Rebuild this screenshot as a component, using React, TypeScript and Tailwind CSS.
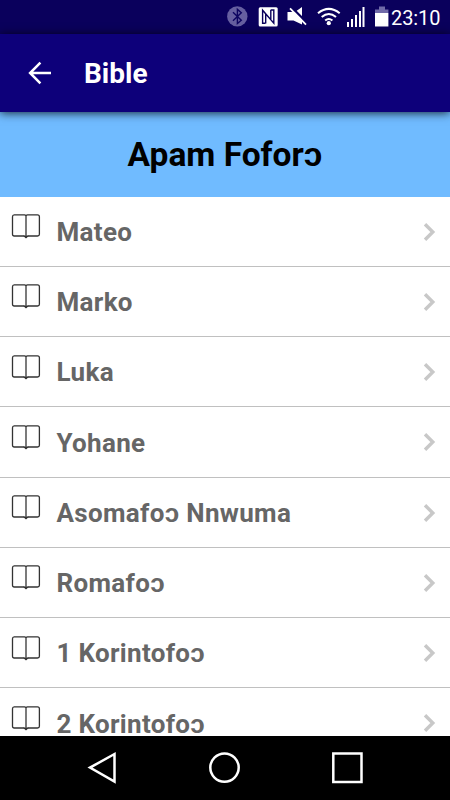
import React from "react";

const books = ["Mateo", "Marko", "Luka", "Yohane", "Asomafoɔ Nnwuma", "Romafoɔ", "1 Korintofoɔ", "2 Korintofoɔ"];

function StatusBar() {
  return (
    <header className="flex h-[34px] shrink-0 items-center bg-[#0a005c] pr-[9px] text-white">
      <svg className="ml-auto h-[34px] w-[164px] shrink-0" viewBox="226 0 164 34" fill="none">
        <circle cx="237.3" cy="16.4" r="10.2" fill="#665fa0" />
        <path d="M233 12.2 L241.3 20.3 L237.4 23.6 V9.4 L241.3 12.8 L233 20.8" stroke="#0d0460" strokeWidth="1.4" />
        <rect x="258.7" y="7.3" width="19" height="19.2" rx="1.5" fill="#fff" />
        <path d="M265.4 23.2H262.6V10.2L273.8 23.2V10H270.9M265.7 14.2V23.5M270.8 9.8V19" stroke="#0a005c" strokeWidth="1.4" />
        <path d="M287.5 12 H295 L302 7 V24.5 L293.5 20.5 H287.5 Z" fill="#fff" />
        <path d="M291.8 7.6 L307.5 23.3" stroke="#0a005c" strokeWidth="2.4" />
        <path d="M290 8.4 L306 24.6" stroke="#fff" strokeWidth="1.8" />
        <path d="M318 13.2 Q328.8 4.5 339.7 13.2 M321.7 17 Q328.8 11 336 17 M325.2 20.5 Q328.8 17.5 332.4 20.5" stroke="#fff" strokeWidth="2.1" />
        <circle cx="328.8" cy="23.2" r="2.1" fill="#fff" />
        <path d="M348 22v5 M352 19v8 M356 15v12 M360 11v16 M363.5 7v20" stroke="#fff" strokeWidth="2" />
        <path d="M379 6.5h6v3h3.4v3.5H375V9.5h4z" fill="#706aa8" />
        <path d="M375 13h13.4v13.5H375z" fill="#fff" />
      </svg>
      <span className="w-[51px] whitespace-nowrap pl-[1px] pt-[2px] text-[20px] leading-[33px] tracking-[-0.1px]">23:10</span>
    </header>
  );
}

function BookIcon() {
  return (
    <svg className="mt-[15.6px] h-[28px] w-[30px] shrink-0" viewBox="0 0 30 28" fill="none" stroke="#333" strokeWidth="1.3">
      <path d="M3.2 2.9H13.5L15 3.4L16.5 2.9H26.5Q28.4 2.9 28.4 4.8V22.3Q28.4 24 26.5 24H17.2L15 24.9L12.8 24H3.2Q1.5 24 1.5 22.3V4.8Q1.5 2.9 3.2 2.9Z" />
      <path d="M15 3V25" />
      <path d="M13.7 24.4h2.6l-1.3 1.2z" fill="#222" />
    </svg>
  );
}

export default function App() {
  return (
    <div className="flex h-[800px] w-[450px] flex-col overflow-hidden bg-white font-['Roboto',sans-serif]">
      <StatusBar />
      <nav className="z-10 flex h-[78px] shrink-0 items-center bg-[#0d007a] pl-[28px] text-white shadow-[0_1px_9px_rgba(0,0,0,0.8)]">
        <svg className="h-[24px] w-[24px]" viewBox="0 0 24 24" fill="none" stroke="#fff" strokeWidth="2.5">
          <path d="M23 12H2M12.4 1.7L2.1 12l10.3 10.3" />
        </svg>
        <h1 className="ml-[32px] pt-[2px] text-[28px] font-bold leading-[76px]">Bible</h1>
      </nav>
      <h2 className="h-[84.5px] shrink-0 bg-[#70bbff] text-center text-[33.5px] font-bold leading-[85px] text-black">Apam Foforɔ</h2>
      <main className="min-h-0 flex-1 overflow-hidden">
        {books.map((book) => (
          <div key={book} className="flex h-[70.25px] border-b-[1.5px] border-[#c0c0c0] pl-[11px] pr-[13px]">
            <BookIcon />
            <span className="ml-[15.5px] mt-[24.3px] h-[22px] text-[26px] font-bold leading-[22px] tracking-[0.32px] text-[#666]">{book}</span>
            <svg className="ml-auto mt-[25px] h-[20px] w-[14px]" viewBox="0 0 14 20" fill="none" stroke="#c8c8c8" strokeWidth="3.4">
              <path d="M2 2.2L9.8 10L2 17.8" />
            </svg>
          </div>
        ))}
      </main>
      <footer className="flex h-[64.5px] shrink-0 bg-black">
        <svg className="h-[64px] w-[450px]" viewBox="0 736 450 64" fill="none" stroke="#fff" strokeWidth="2.5">
          <path d="M114.5 754V781.5L90 767.6Z" />
          <circle cx="224.5" cy="767.6" r="14.2" />
          <rect x="333.3" y="753.5" width="28.2" height="28.5" />
        </svg>
      </footer>
    </div>
  );
}
